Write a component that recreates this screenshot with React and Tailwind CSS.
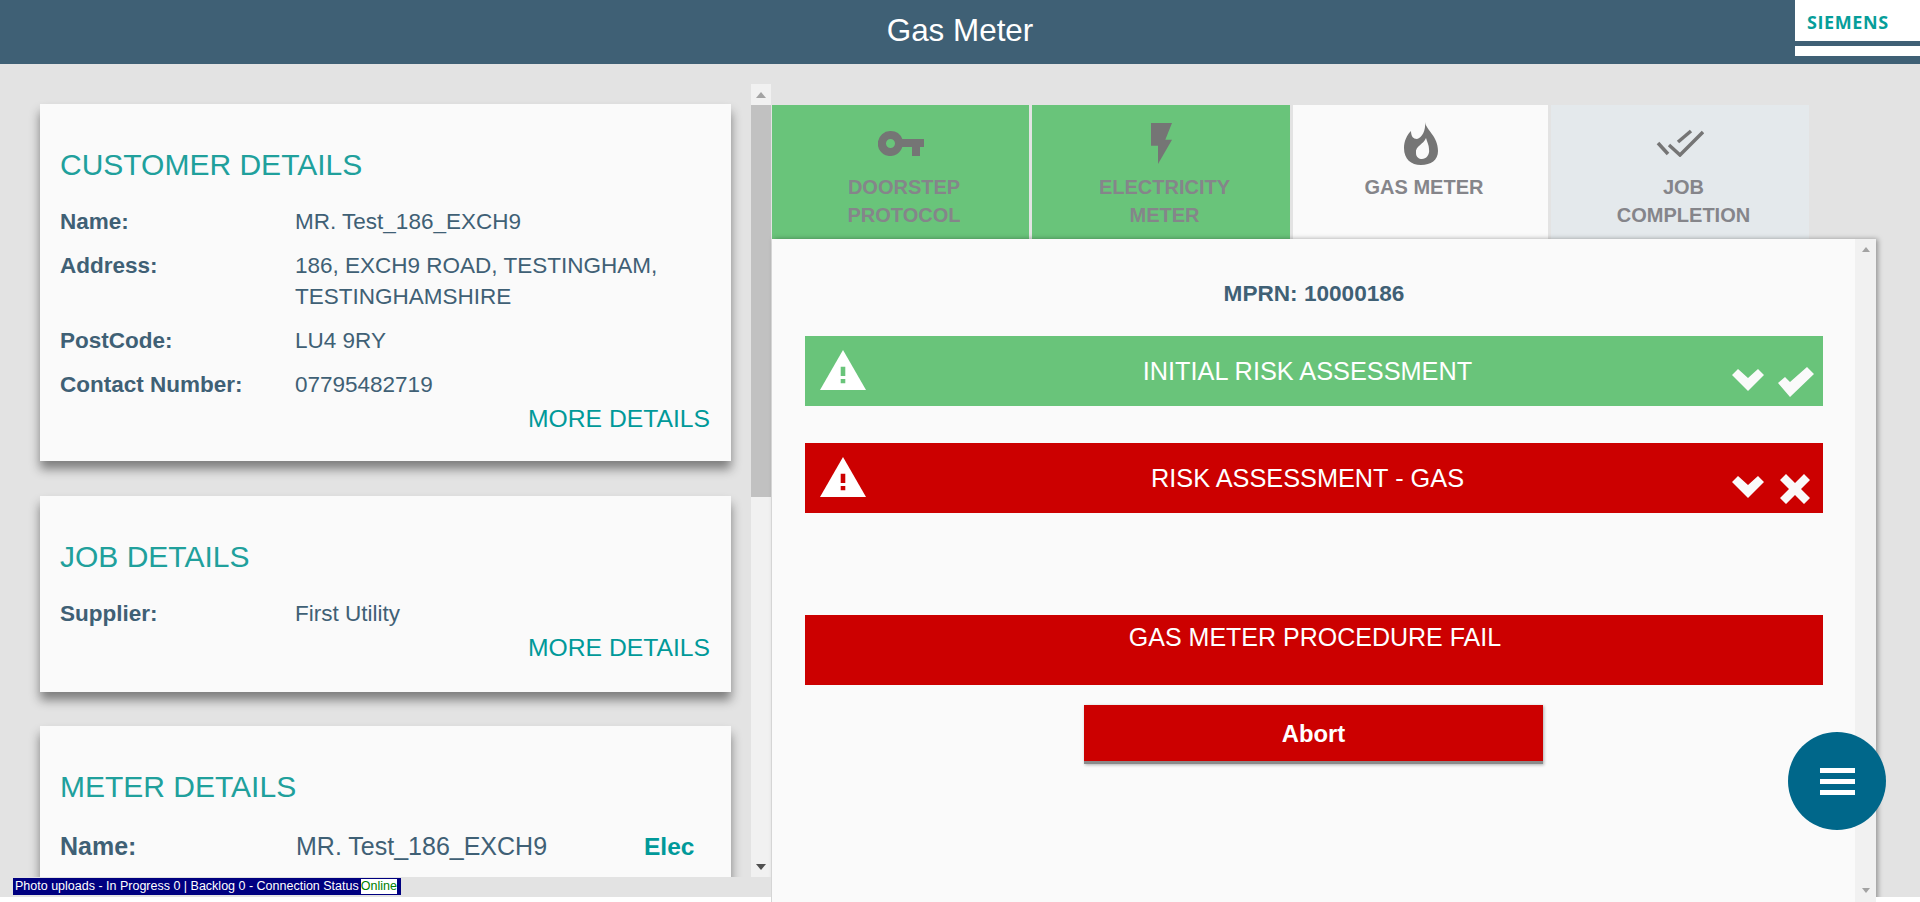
import React from "react";

const font = "font-['Liberation_Sans',Arial,sans-serif]";

const DetailRow = ({ label, value }) => (
  <div className="flex text-[22.5px] leading-[31px] text-[#3f6075] mb-[13px]">
    <div className="font-bold w-[235px] shrink-0">{label}</div>
    <div className="flex-1">{value}</div>
  </div>
);

const Card = ({ title, rows, more, className, children }) => (
  <div className={`bg-[#fafafa] shadow-[0_8px_10px_rgba(0,0,0,0.45)] pl-[20px] pr-[21px] ${className}`}>
    <h2 className="text-[30px] leading-8 text-[#20a09c] uppercase pt-[45px] mb-[25px]">{title}</h2>
    {rows && rows.map((r) => <DetailRow key={r.label} label={r.label} value={r.value} />)}
    {more && (
      <div className="text-right text-[24.7px] leading-7 text-[#009999] -mt-[8px]">MORE DETAILS</div>
    )}
    {children}
  </div>
);

const KeyIcon = () => (
  <svg width="46" height="25" viewBox="0 0 46 25" fill="#757575">
    <path
      fillRule="evenodd"
      d="M12.500 0a12.500 12.500 0 0 1 11.800 8H46v8h-4v9h-8v-9h-9.700a12.500 12.500 0 1 1-11.800-16zm0 8a4.500 4.500 0 1 0 0 9 4.500 4.500 0 0 0 0-9z"
    />
  </svg>
);

const BoltIcon = () => (
  <svg width="21" height="41" viewBox="0 0 21 41" fill="#757575">
    <path d="M0 0h21l-6.700 16.700H21L7 41V22.700H0z" />
  </svg>
);

const FlameIcon = () => (
  <svg width="34" height="43" viewBox="0 0 34 43" fill="#757575">
    <path
      fillRule="evenodd"
      d="M21 0c1 8 13 14 13 29 0 9-7 14-17 14S0 37 0 26c0-7 3-13 7-17 0 5 2 8 6 8 5-1 9-9 8-17zM22 16c-2 6-11 8-10 15 0 4 3 6 6 6 4 0 8-4 7-10 0-4-2-7-3-11z"
    />
  </svg>
);

const DoubleCheckIcon = () => (
  <svg width="48" height="28" viewBox="0 0 48 28" fill="none" stroke="#757575" strokeWidth="3.500">
    <path d="M2 14l10 11" />
    <path d="M13 16l11 10L47 3" />
    <path d="M22 13L35 2" />
  </svg>
);

const Tab = ({ icon, lines, className }) => (
  <div className={`h-[134px] flex flex-col items-center ${className}`}>
    <div className="h-[46px] mt-[15px] flex items-center justify-center">{icon}</div>
    <div className="text-[20px] leading-7 font-bold text-center text-[#85858a] mt-[7px] pl-[7px] uppercase">
      {lines.map((l) => (
        <div key={l}>{l}</div>
      ))}
    </div>
  </div>
);

const WarnIcon = () => (
  <svg width="46" height="40" viewBox="0 0 46 40" className="shrink-0">
    <path d="M23 0l23 40H0z" fill="#fff" />
    <path d="M20.700 16.700h4.600V26h-4.600zM20.700 29h4.600v4.300h-4.600z" fill="currentColor" />
  </svg>
);

const Chevron = () => (
  <svg width="32" height="22" viewBox="0 0 32 22" fill="#fafafa" className="mt-[2px]">
    <path d="M0 6l6-6 10 9 10-9 6 6-16 16z" />
  </svg>
);

const Tick = () => (
  <svg width="36" height="30" viewBox="0 0 36 30" fill="#fafafa">
    <path d="M0 16l7-6 5 5L29 0l7 7-24 23z" />
  </svg>
);

const Cross = () => (
  <svg width="30" height="30" viewBox="0 0 30 30" fill="#fafafa" className="-ml-[2px]">
    <path d="M0 6l6-6 9 9 9-9 6 6-9 9 9 9-6 6-9-9-9 9-6-6 9-9z" />
  </svg>
);

const Section = ({ title, bg, text, status }) => (
  <div className={`${bg} ${text} h-[70px] flex items-start relative mb-[37px] pl-[15px]`}>
    <div className="mt-[14px]">
      <WarnIcon />
    </div>
    <div className="flex-1 text-center text-white text-[25.300px] leading-7 mt-[21px] pr-[74px]">{title}</div>
    <div className="absolute right-[9px] top-[31px] flex items-start gap-[14px]">
      <Chevron />
      <div className="w-[36px] flex justify-center">{status}</div>
    </div>
  </div>
);

export default function App() {
  return (
    <div className={`${font} relative h-[902px] w-[1920px] overflow-hidden bg-[#e3e3e3]`}>
      <header className="h-16 bg-[#3f6075] flex items-center justify-center relative">
        <h1 className="text-white text-[31.400px] leading-none font-normal -mt-[3px]">Gas Meter</h1>
        <div className="absolute right-0 top-0 w-[125px]">
          <div className="h-[41px] bg-white pl-[12px] pt-[15px] text-[#069e9a] text-[18px] leading-[14px] font-bold tracking-[0.6px] font-['Open_Sans',sans-serif]">
            SIEMENS
          </div>
          <div className="h-[5px]" />
          <div className="h-[10px] bg-white" />
        </div>
      </header>

      <main className="flex items-start h-[838px]">
        <div className="w-[751px] shrink-0 h-[813px] overflow-hidden pl-10 pr-5 pt-10">
          <Card
            title="Customer Details"
            className="h-[357px]"
            more
            rows={[
              { label: "Name:", value: "MR. Test_186_EXCH9" },
              { label: "Address:", value: "186, EXCH9 ROAD, TESTINGHAM, TESTINGHAMSHIRE" },
              { label: "PostCode:", value: "LU4 9RY" },
              { label: "Contact Number:", value: "07795482719" },
            ]}
          />
          <Card
            title="Job Details"
            className="h-[196px] mt-[35px]"
            more
            rows={[{ label: "Supplier:", value: "First Utility" }]}
          />
          <Card title="Meter Details" className="h-[300px] mt-[34px]">
            <div className="flex items-baseline text-[25px] leading-8 text-[#3f6075] pt-[2px]">
              <div className="font-bold w-[236px]">Name:</div>
              <div className="w-[348px]">MR. Test_186_EXCH9</div>
              <div className="font-bold text-[#009999] text-[24.500px]">Elec</div>
            </div>
          </Card>
        </div>

        <div className="w-[20px] h-[793px] mt-5 bg-[#f1f1f1] flex flex-col items-center shrink-0">
          <div className="h-[21px] flex items-center justify-center">
            <div className="border-x-[5px] border-x-transparent border-b-[6px] border-b-[#a3a3a3]" />
          </div>
          <div className="w-full flex-1">
            <div className="h-[392px] bg-[#c1c1c1]" />
          </div>
          <div className="h-[21px] flex items-center justify-center">
            <div className="border-x-[5px] border-x-transparent border-t-[6px] border-t-[#505050]" />
          </div>
        </div>

        <div className="w-[1104px] shrink-0 pt-[41px] ml-[1px]">
          <div className="flex gap-[3px]">
            <Tab className="bg-[#69c47a] w-[257px]" icon={<KeyIcon />} lines={["Doorstep", "Protocol"]} />
            <Tab className="bg-[#69c47a] w-[258px]" icon={<BoltIcon />} lines={["Electricity", "Meter"]} />
            <Tab className="bg-[#fafafa] w-[255px]" icon={<FlameIcon />} lines={["Gas Meter"]} />
            <Tab className="bg-[#e4e9ec] w-[258px]" icon={<DoubleCheckIcon />} lines={["Job", "Completion"]} />
          </div>

          <div className="h-[700px] bg-[#fafafa] shadow-[2px_0_5px_rgba(0,0,0,0.35)] flex relative">
            <div className="w-[1083px] pl-[33px] pr-[32px] pt-[41px]">
              <div className="text-center text-[22.600px] leading-7 font-bold text-[#3f6075] mb-[28px]">
                MPRN: 10000186
              </div>
              <Section title="INITIAL RISK ASSESSMENT" bg="bg-[#69c47a]" text="text-[#69c47a]" status={<Tick />} />
              <Section title="RISK ASSESSMENT - GAS" bg="bg-[#cc0000]" text="text-[#cc0000]" status={<Cross />} />
              <div className="h-[70px] bg-[#cc0000] mt-[102px] text-center text-white text-[25px] leading-7 pt-[8px] pl-[2px]">
                GAS METER PROCEDURE FAIL
              </div>
              <button className="block h-[59px] w-[459px] ml-[279px] mt-5 pt-[1px] bg-[#cc0000] text-white text-[23.800px] font-bold border-b-[3px] border-b-[#8a8a8a] shadow-[1px_1px_3px_rgba(0,0,0,0.3)]">
                Abort
              </button>
            </div>
            <div className="w-[21px] bg-[#f1f1f1]">
              <div className="h-[661px] flex flex-col items-center justify-between">
                <div className="h-[20px] flex items-center">
                  <div className="border-x-[4px] border-x-transparent border-b-[5px] border-b-[#a3a3a3]" />
                </div>
                <div className="h-[20px] flex items-center">
                  <div className="border-x-[4px] border-x-transparent border-t-[5px] border-t-[#a3a3a3]" />
                </div>
              </div>
            </div>
          </div>
        </div>
      </main>

      <div className="absolute left-0 top-[877px] h-5 w-[771px] bg-[#e3e3e3]">
        <div className="ml-[13px] mt-[1px] w-[388px] h-[17px] flex items-center bg-[#000080] text-white text-[12.500px] leading-[15px] pl-[2px] whitespace-nowrap">
          <span>Photo uploads - In Progress 0 | Backlog 0 - Connection Status</span>
          <span className="bg-white text-[#008000] h-[15px] w-[36px] ml-[2px]">Online</span>
        </div>
      </div>

      <div className="absolute left-0 top-[897px] h-[5px] w-[771px] bg-white" />
      <div className="absolute left-[1876px] top-[897px] h-[5px] w-[44px] bg-white" />

      <button className="absolute left-[1788px] top-[732px] w-[98px] h-[98px] rounded-full bg-[#00678a] flex flex-col items-center justify-center gap-[6px]">
        <span className="block w-[35px] h-[5px] bg-white" />
        <span className="block w-[35px] h-[5px] bg-white" />
        <span className="block w-[35px] h-[5px] bg-white" />
      </button>
    </div>
  );
}
